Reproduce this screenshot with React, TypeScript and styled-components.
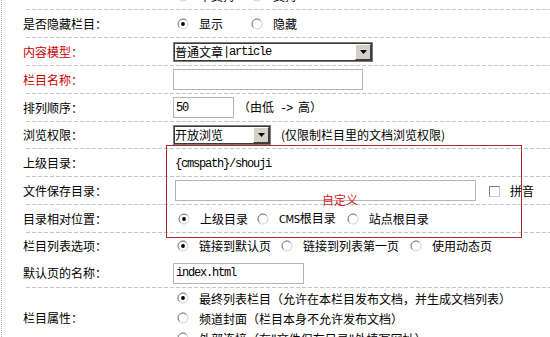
import React from "react";
import styled, { createGlobalStyle } from "styled-components";

const Global = createGlobalStyle`
  html, body { margin: 0; padding: 0; background: #fff; }
  body {
    font-family: "Noto Sans CJK SC", "Noto Sans", sans-serif;
    font-size: 12px;
    color: #000;
    overflow: hidden;
  }
`;

const Page = styled.div`
  margin-left: 1px;
  border-left: 1px dotted #b8b8b8;
  height: 337px;
  overflow: hidden;
  padding-left: 21px;
`;

const Form = styled.div`
  display: flex;
  flex-direction: column;
`;

const Row = styled.div<{ $h?: number; $line?: boolean; $top?: number }>`
  display: flex;
  align-items: center;
  box-sizing: border-box;
  height: ${(p) => (p.$h ? `${p.$h}px` : "auto")};
  padding-bottom: ${(p) => (p.$line === false ? 0 : 1)}px;
  margin-top: ${(p) => p.$top ?? 0}px;
  background-image: ${(p) =>
    p.$line === false
      ? "none"
      : "repeating-linear-gradient(90deg, #c4c4c4 0 4px, transparent 4px 6px)"};
  background-repeat: no-repeat;
  background-size: calc(100% - 3px) 1px;
  background-position: right bottom;
`;

const Label = styled.div<{ $required?: boolean }>`
  width: 150px;
  flex: none;
  line-height: 14px;
  white-space: nowrap;
  color: ${(p) => (p.$required ? "#cc0000" : "#000")};
`;

const Value = styled.div`
  flex: 1;
  display: flex;
  align-items: center;
  line-height: 14px;
  white-space: nowrap;
`;

const Stack = styled.div`
  display: flex;
  flex-direction: column;
`;

const Line = styled.div`
  height: 20px;
  display: flex;
  align-items: center;
  white-space: nowrap;
`;

const Option = styled.span<{ $gap?: number }>`
  display: inline-flex;
  align-items: center;
  margin-left: ${(p) => p.$gap ?? 0}px;
`;

const OptionText = styled.span`
  margin-left: 10px;
`;

const Mono = styled.span`
  font-family: "Liberation Mono", monospace;
  font-size: 12px;
  letter-spacing: -1.2px;
`;

const Caps = styled.span`
  font-family: "DejaVu Sans", sans-serif;
  font-size: 10px;
  letter-spacing: -0.4px;
`;

const Hint = styled.span<{ $ml: number }>`
  margin-left: ${(p) => p.$ml}px;
`;

const TextInput = styled.input<{ $w: number; $ml?: number }>`
  width: ${(p) => p.$w}px;
  height: 21px;
  box-sizing: border-box;
  margin: 0 0 0 ${(p) => p.$ml ?? 0}px;
  padding: 0 2px;
  border: 1px solid #b4b4b4;
  background: #fff;
  font-family: "Liberation Mono", monospace;
  font-size: 12px;
  letter-spacing: -1.2px;
  color: #000;
  outline: none;
`;

const Select = styled.div<{ $w: number }>`
  display: flex;
  align-items: stretch;
  width: ${(p) => p.$w}px;
  height: 20px;
  box-sizing: border-box;
  border: 1px solid #7b7b7b;
  box-shadow: inset 0 0 0 1px #3a3a3a;
  padding: 1px;
  background: #fff;
`;

const SelectValue = styled.div`
  flex: 1;
  display: flex;
  align-items: center;
  overflow: hidden;
  white-space: nowrap;
  line-height: 14px;
`;

const DropButton = styled.div`
  width: 16px;
  flex: none;
  box-sizing: border-box;
  background: #d4d0c8;
  border: 1px solid;
  border-color: #ffffff #404040 #404040 #ffffff;
  display: flex;
  align-items: center;
  justify-content: center;
`;

const Group = styled.div`
  position: relative;
  display: flex;
  flex-direction: column;
`;

const Annotation = styled.div`
  position: absolute;
  left: 143px;
  top: -4px;
  width: 356px;
  height: 93px;
  box-sizing: border-box;
  border: 1px solid #b3262d;
  pointer-events: none;
`;

const AnnotationText = styled.span`
  position: absolute;
  left: 155px;
  top: 47px;
  color: #d42a2a;
  line-height: 14px;
`;

const Check = styled.span`
  display: inline-flex;
  margin-left: 13px;
  margin-top: 2px;
`;

const Radio = ({ checked }: { checked?: boolean }) => (
  <svg width="12" height="12" viewBox="0 0 12 12">
    <circle cx="6" cy="6" r="5" fill="#fff" stroke="#cfcfcf" />
    <path d="M2.46 9.54A5 5 0 0 1 9.54 2.46" stroke="#7c7c7c" fill="none" />
    {checked && <circle cx="6" cy="6" r="1.9" fill="#000" />}
  </svg>
);

const RadioOption = ({
  checked,
  gap,
  children,
}: {
  checked?: boolean;
  gap?: number;
  children: React.ReactNode;
}) => (
  <Option $gap={gap}>
    <Radio checked={checked} />
    <OptionText>{children}</OptionText>
  </Option>
);

const Arrow = () => (
  <svg width="7" height="4" viewBox="0 0 7 4">
    <path d="M0 0H7L3.5 4Z" fill="#000" />
  </svg>
);

const CheckBox = () => (
  <svg width="11" height="11" viewBox="0 0 11 11">
    <rect x="0.5" y="0.5" width="10" height="10" fill="#fff" stroke="#c6c6c6" />
    <path d="M0.5 10.5V0.5H10.5" stroke="#7c7c7c" fill="none" />
  </svg>
);

export default function App() {
  return (
    <>
      <Global />
      <Page>
        <Form>
          <Row $h={28} $top={-18}>
            <Label />
            <Value>
              <RadioOption gap={4}>不支持</RadioOption>
              <RadioOption gap={16} checked>
                支持
              </RadioOption>
            </Value>
          </Row>
          <Row $h={28}>
            <Label>是否隐藏栏目：</Label>
            <Value>
              <RadioOption gap={4} checked>
                显示
              </RadioOption>
              <RadioOption gap={28}>隐藏</RadioOption>
            </Value>
          </Row>
          <Row $h={28}>
            <Label $required>内容模型：</Label>
            <Value>
              <Select $w={200}>
                <SelectValue>
                  普通文章<Mono>|article</Mono>
                </SelectValue>
                <DropButton>
                  <Arrow />
                </DropButton>
              </Select>
            </Value>
          </Row>
          <Row $h={28}>
            <Label $required>栏目名称：</Label>
            <Value>
              <TextInput $w={190} readOnly value="" />
            </Value>
          </Row>
          <Row $h={28}>
            <Label>排列顺序：</Label>
            <Value>
              <TextInput $w={61} readOnly value="50" />
              <Hint $ml={4}>
                （由低<Mono> -&gt; </Mono>高）
              </Hint>
            </Value>
          </Row>
          <Row $h={27}>
            <Label>浏览权限：</Label>
            <Value>
              <Select $w={98}>
                <SelectValue>开放浏览</SelectValue>
                <DropButton>
                  <Arrow />
                </DropButton>
              </Select>
              <Hint $ml={10}>(仅限制栏目里的文档浏览权限)</Hint>
            </Value>
          </Row>
          <Group>
            <Row $h={28}>
              <Label>上级目录：</Label>
              <Value>
                <Hint $ml={2}>
                  <Mono>{"{cmspath}/shouji"}</Mono>
                </Hint>
              </Value>
            </Row>
            <Row $h={28}>
              <Label>文件保存目录：</Label>
              <Value>
                <TextInput $w={301} $ml={2} readOnly value="" />
                <Check>
                  <CheckBox />
                </Check>
                <Hint $ml={10}>拼音</Hint>
              </Value>
            </Row>
            <Row $h={28}>
              <Label>目录相对位置：</Label>
              <Value>
                <RadioOption gap={5} checked>
                  上级目录
                </RadioOption>
                <RadioOption gap={9}>
                  <Caps>CMS</Caps>根目录
                </RadioOption>
                <RadioOption gap={11}>站点根目录</RadioOption>
              </Value>
            </Row>
            <Annotation>
              <AnnotationText>自定义</AnnotationText>
            </Annotation>
          </Group>
          <Row $h={26} $line={false}>
            <Label>栏目列表选项：</Label>
            <Value>
              <RadioOption gap={4} checked>
                链接到默认页
              </RadioOption>
              <RadioOption gap={10}>链接到列表第一页</RadioOption>
              <RadioOption gap={11}>使用动态页</RadioOption>
            </Value>
          </Row>
          <Row $h={29}>
            <Label>默认页的名称：</Label>
            <Value>
              <TextInput $w={131} readOnly value="index.html" />
            </Value>
          </Row>
          <Row $line={false}>
            <Label>栏目属性：</Label>
            <Stack>
              <Line>
                <RadioOption gap={4} checked>
                  最终列表栏目（允许在本栏目发布文档，并生成文档列表）
                </RadioOption>
              </Line>
              <Line>
                <RadioOption gap={4}>频道封面（栏目本身不允许发布文档）</RadioOption>
              </Line>
              <Line>
                <RadioOption gap={4}>外部连接（在"文件保存目录"处填写网址）</RadioOption>
              </Line>
            </Stack>
          </Row>
        </Form>
      </Page>
    </>
  );
}
